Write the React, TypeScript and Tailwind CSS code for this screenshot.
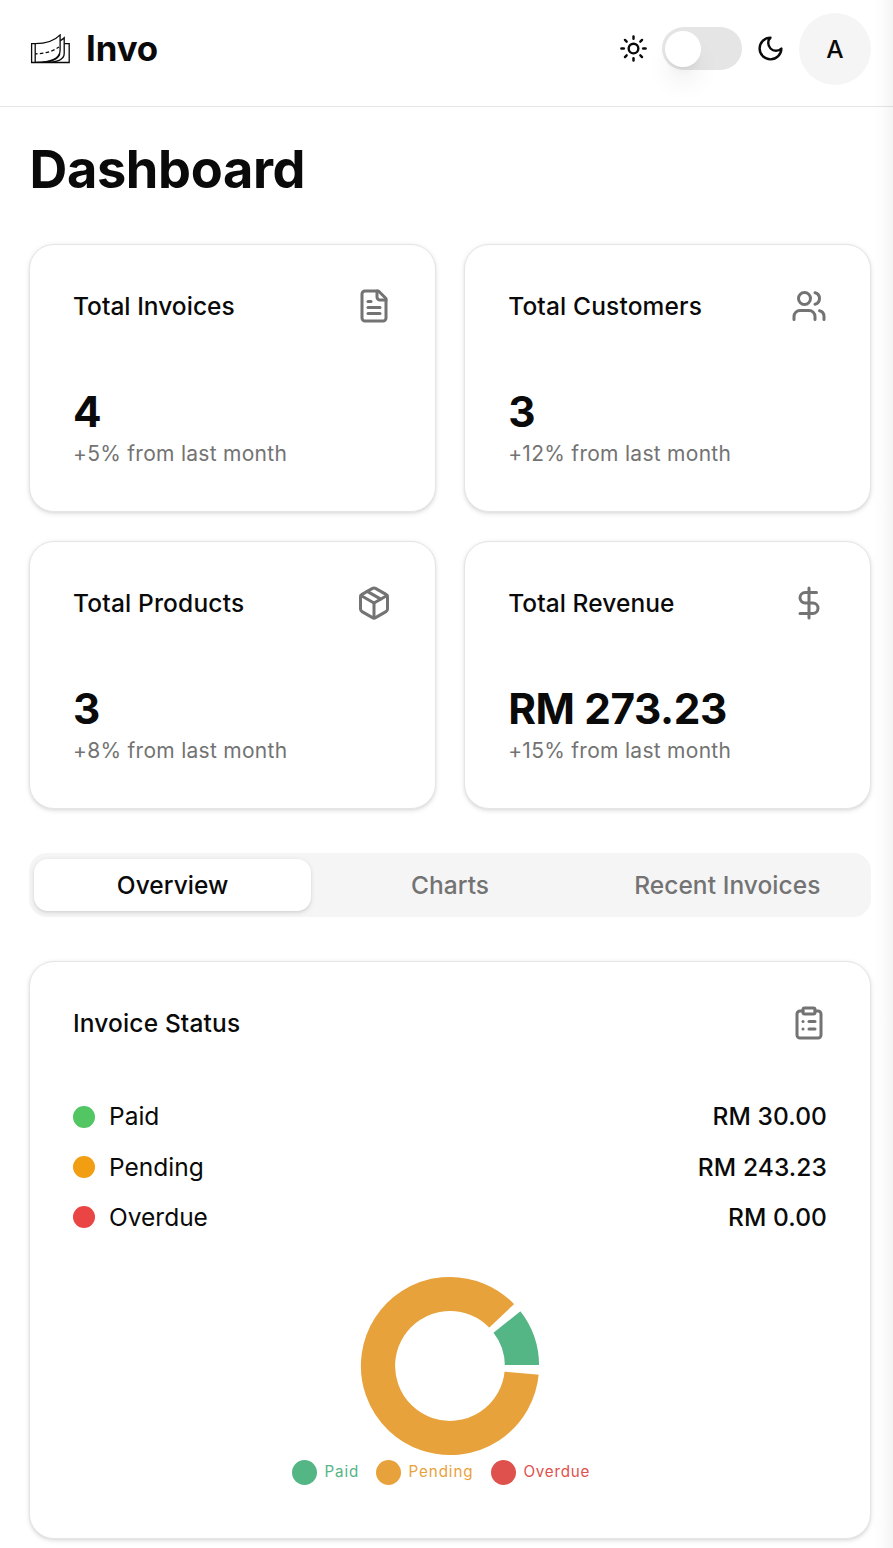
import type { ReactNode } from 'react';
import { ClipboardList, DollarSign, Package, Sun, Users } from 'lucide-react';

const iconClass = 'size-9 text-[#737373]';
const cardClass =
  'rounded-[25px] border border-[#e5e5e5] bg-white p-[43px] shadow-[0_1.8px_5.4px_rgba(0,0,0,0.1),0_1.8px_3.6px_-1.8px_rgba(0,0,0,0.1)]';

function Logo() {
  return (
    <svg viewBox="0 0 40 30" className="mt-px h-[30px] w-10" fill="none" stroke="#0a0a0a" strokeWidth="1.3">
      <path d="M5 9.7H1.6V28.5H39.2V9.7H34.4" />
      <path d="M5.2 9.7V28.5" />
      <path d="M5 9.7C14 9.7 24 7.4 30.1 0.9V16.2C30.1 23.6 23.5 28.2 5.5 28.4" />
      <path d="M30.3 6.6C31.8 5.8 33 4.9 34.2 3.7V19.4C34.2 25.6 27.5 28.3 15 28.4" />
      <path d="M29.8 19.6C28.6 25 22.5 27.6 13 28.3" />
      <path d="M5.5 19.8C14 19.7 22 17.9 29 13" strokeDasharray="3.6 2.3" strokeDashoffset="1.6" />
    </svg>
  );
}

function Moon() {
  return (
    <svg viewBox="0 0 24 24" className="size-[29px]" fill="none" stroke="currentColor" strokeWidth="2" strokeLinecap="round" strokeLinejoin="round">
      <path d="M12 3a6 6 0 0 0 9 9 9 9 0 1 1-9-9Z" />
    </svg>
  );
}

function FileText() {
  return (
    <svg viewBox="0 0 24 24" className={iconClass} fill="none" stroke="currentColor" strokeWidth="2" strokeLinecap="round" strokeLinejoin="round">
      <path d="M15 2H6a2 2 0 0 0-2 2v16a2 2 0 0 0 2 2h12a2 2 0 0 0 2-2V7Z" />
      <path d="M14 2v4a2 2 0 0 0 2 2h4" />
      <path d="M10 9H8" />
      <path d="M16 13H8" />
      <path d="M16 17H8" />
    </svg>
  );
}

type StatProps = { title: string; value: string; change: string; icon: ReactNode; tracking: string };

function StatCard({ title, value, change, icon, tracking }: StatProps) {
  return (
    <div className={cardClass}>
      <div className="flex h-9 items-center justify-between">
        <h3 className={`text-[24.5px] font-medium ${tracking}`}>{title}</h3>
        {icon}
      </div>
      <div className="mt-[59px] h-[57px] text-[42.3px] leading-[58px] font-bold tracking-[-0.4px]">{value}</div>
      <p className="h-7 text-[21px] leading-[28px] tracking-[0.28px] text-[#737373]">{change}</p>
    </div>
  );
}

type StatusProps = { dot: string; label: string; amount: string };

function StatusRow({ dot, label, amount }: StatusProps) {
  return (
    <div className="flex h-9 items-center justify-between text-[24.5px]">
      <div className="flex items-center gap-3.5">
        <span className={`size-[22px] rounded-full ${dot}`} />
        <span>{label}</span>
      </div>
      <span className="font-medium tracking-[0.1px]">{amount}</span>
    </div>
  );
}

const point = (radius: number, degrees: number) => {
  const angle = (degrees * Math.PI) / 180;
  return `${(100 + radius * Math.cos(angle)).toFixed(2)} ${(100 - radius * Math.sin(angle)).toFixed(2)}`;
};

const sector = (start: number, end: number) => {
  const large = end - start > 180 ? 1 : 0;
  return `M${point(90, start)}A90 90 0 ${large} 0 ${point(90, end)}L${point(54, end)}A54 54 0 ${large} 1 ${point(54, start)}Z`;
};

function Donut() {
  const paid = (30 / 273.23) * 350;
  return (
    <svg viewBox="0 0 200 200" className="size-[200px]" stroke="#fff" strokeWidth="1.8">
      <path d={sector(0, paid)} fill="#54b585" />
      <path d={sector(paid + 5, 355)} fill="#e8a23b" />
    </svg>
  );
}

export default function App() {
  return (
    <div className="relative h-[1548px] w-[893px] overflow-hidden bg-white font-[Inter,sans-serif] text-[#0a0a0a]">
      <header className="flex h-[107px] items-start justify-between border-b border-[#e5e5e5] pt-[13px] pr-[22px] pl-[30px]">
        <div className="flex h-[70px] items-center">
          <Logo />
          <span className="ml-4 text-[34.8px] leading-none font-bold tracking-[-0.1px]">Invo</span>
        </div>
        <div className="flex items-start">
          <div className="flex h-[71px] items-center">
            <Sun className="size-[29px]" />
            <div className="ml-3.5 flex h-[43px] w-20 items-center rounded-full bg-[#e5e5e5] px-[3px]">
              <span className="size-9 rounded-full bg-white shadow-[0_18px_27px_-5.4px_rgba(0,0,0,0.1),0_7.2px_10.8px_-7.2px_rgba(0,0,0,0.1)]" />
            </div>
            <span className="ml-3.5">
              <Moon />
            </span>
          </div>
          <div className="ml-3.5 flex size-[72px] items-center justify-center rounded-full bg-[#f5f5f5] text-[24.5px] font-medium">A</div>
        </div>
      </header>

      <main className="pt-8 pr-[22px] pl-[29px]">
        <h1 className="mb-[45px] h-[60px] pl-[0.5px] text-[52.3px] leading-[60px] font-bold tracking-[-0.35px]">Dashboard</h1>

        <section className="grid grid-cols-2 gap-x-[28.4px] gap-y-[29px]">
          <StatCard title="Total Invoices" value="4" change="+5% from last month" tracking="tracking-[0.03px]" icon={<FileText />} />
          <StatCard title="Total Customers" value="3" change="+12% from last month" tracking="tracking-[0.15px]" icon={<Users className={iconClass} />} />
          <StatCard title="Total Products" value="3" change="+8% from last month" tracking="tracking-[0.18px]" icon={<Package className={iconClass} />} />
          <StatCard title="Total Revenue" value="RM 273.23" change="+15% from last month" tracking="tracking-[0.08px]" icon={<DollarSign className={iconClass} />} />
        </section>

        <nav className="mt-11 grid h-16 grid-cols-3 rounded-[18px] bg-[#f5f5f5] px-[5px] py-1.5 text-[24.5px] font-medium tracking-[0.06px] text-[#737373]">
          <button className="rounded-[14px] bg-white text-[#0a0a0a] shadow-[0_1.8px_5.4px_rgba(0,0,0,0.1),0_1.8px_3.6px_-1.8px_rgba(0,0,0,0.1)]">
            Overview
          </button>
          <button>Charts</button>
          <button>Recent Invoices</button>
        </nav>

        <section className={`mt-11 h-[578px] ${cardClass}`}>
          <div className="flex h-9 items-center justify-between">
            <h3 className="text-[24.5px] font-medium tracking-[0.15px]">Invoice Status</h3>
            <ClipboardList className={iconClass} />
          </div>
          <div className="mt-[57.7px] flex flex-col gap-[14.4px]">
            <StatusRow dot="bg-[#51c662]" label="Paid" amount="RM 30.00" />
            <StatusRow dot="bg-[#f19e12]" label="Pending" amount="RM 243.23" />
            <StatusRow dot="bg-[#ea4444]" label="Overdue" amount="RM 0.00" />
          </div>
          <div className="mt-[30.1px] flex justify-center">
            <Donut />
          </div>
          <div className="-mt-[6px] ml-[219px] flex h-[26px] items-center text-[15.2px] leading-[22px]">
            <div className="flex w-[84px] items-center gap-[7.5px] tracking-[0.85px] text-[#54b585]">
              <span className="size-[25px] rounded-full bg-[#54b585]" />
              <span className="-mt-0.5">Paid</span>
            </div>
            <div className="flex w-[115px] items-center gap-[7.5px] tracking-[0.9px] text-[#e8a23b]">
              <span className="size-[25px] rounded-full bg-[#e8a23b]" />
              <span className="-mt-0.5">Pending</span>
            </div>
            <div className="flex items-center gap-[7.5px] tracking-[0.75px] text-[#df514c]">
              <span className="size-[25px] rounded-full bg-[#df514c]" />
              <span className="-mt-0.5">Overdue</span>
            </div>
          </div>
        </section>
      </main>

      <div className="pointer-events-none absolute inset-y-0 right-0 w-[22px] bg-linear-to-r from-black/0 via-black/[0.012] to-black/[0.045]" />
    </div>
  );
}
